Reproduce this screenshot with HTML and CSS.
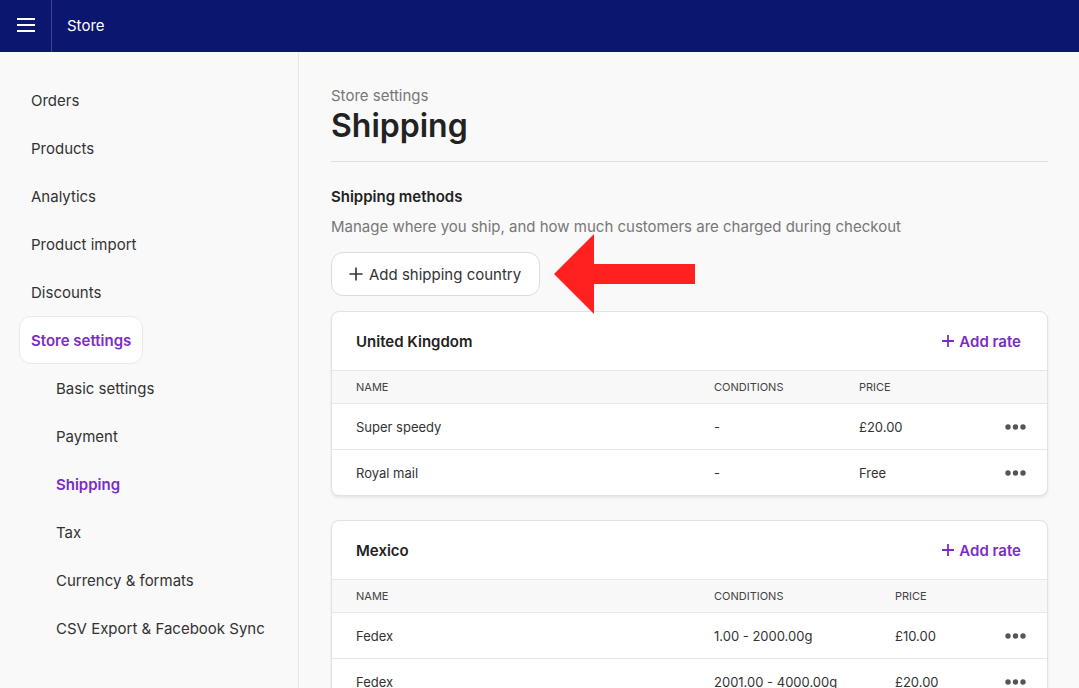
FILE: index.html
```html
<!DOCTYPE html>
<html lang="en">
<head>
    <meta charset="UTF-8">
    <meta name="viewport" content="width=device-width, initial-scale=1.0">
    <title>Shipping - Store settings</title>
    <link rel="stylesheet" href="styles.css">
</head>
<body>
    <header class="topbar">
        <button class="menu-btn" aria-label="Menu">
            <svg width="18" height="14" viewBox="0 0 18 14"><rect y="0" width="18" height="2" fill="#fff"/><rect y="6" width="18" height="2" fill="#fff"/><rect y="12" width="18" height="2" fill="#fff"/></svg>
        </button>
        <div class="topbar-title">Store</div>
    </header>

    <div class="layout">
        <nav class="sidebar">
            <a class="nav-item" href="#">Orders</a>
            <a class="nav-item" href="#">Products</a>
            <a class="nav-item" href="#">Analytics</a>
            <a class="nav-item" href="#">Product import</a>
            <a class="nav-item" href="#">Discounts</a>
            <a class="nav-item active" href="#">Store settings</a>
            <a class="nav-item sub" href="#">Basic settings</a>
            <a class="nav-item sub" href="#">Payment</a>
            <a class="nav-item sub current" href="#">Shipping</a>
            <a class="nav-item sub" href="#">Tax</a>
            <a class="nav-item sub" href="#">Currency &amp; formats</a>
            <a class="nav-item sub" href="#">CSV Export &amp; Facebook Sync</a>
        </nav>

        <main class="content">
            <div class="crumb">Store settings</div>
            <h1 class="page-title">Shipping</h1>

            <section class="methods">
                <h2 class="section-title">Shipping methods</h2>
                <p class="section-desc">Manage where you ship, and how much customers are charged during checkout</p>

                <div class="add-row">
                    <button class="btn-outline">
                        <svg width="14" height="14" viewBox="0 0 14 14"><path d="M7 0.5v13M0.5 7h13" stroke="#333" stroke-width="1.6"/></svg>
                        Add shipping country
                    </button>
                    <!-- callout arrow -->
                    <svg class="callout" width="142" height="80" viewBox="0 0 142 80"><polygon points="0,40 40,0 40,30 141,30 141,50 40,50 40,80" fill="#ff2020"/></svg>
                </div>

                <div class="card">
                    <div class="card-head">
                        <span class="country">United Kingdom</span>
                        <a class="add-rate" href="#">
                            <svg width="12" height="12" viewBox="0 0 12 12"><path d="M6 0v12M0 6h12" stroke="#7b2cc4" stroke-width="1.8"/></svg>
                            Add rate
                        </a>
                    </div>
                    <div class="rate-row th">
                        <span>Name</span><span>Conditions</span><span>Price</span><span></span>
                    </div>
                    <div class="rate-row">
                        <span>Super speedy</span><span>-</span><span>£20.00</span>
                        <span class="dots"><svg width="21" height="6" viewBox="0 0 21 6"><circle cx="3" cy="3" r="2.7"/><circle cx="10.5" cy="3" r="2.7"/><circle cx="18" cy="3" r="2.7"/></svg></span>
                    </div>
                    <div class="rate-row">
                        <span>Royal mail</span><span>-</span><span>Free</span>
                        <span class="dots"><svg width="21" height="6" viewBox="0 0 21 6"><circle cx="3" cy="3" r="2.7"/><circle cx="10.5" cy="3" r="2.7"/><circle cx="18" cy="3" r="2.7"/></svg></span>
                    </div>
                </div>

                <div class="card wide-cond">
                    <div class="card-head">
                        <span class="country">Mexico</span>
                        <a class="add-rate" href="#">
                            <svg width="12" height="12" viewBox="0 0 12 12"><path d="M6 0v12M0 6h12" stroke="#7b2cc4" stroke-width="1.8"/></svg>
                            Add rate
                        </a>
                    </div>
                    <div class="rate-row th">
                        <span>Name</span><span>Conditions</span><span>Price</span><span></span>
                    </div>
                    <div class="rate-row">
                        <span>Fedex</span><span>1.00 - 2000.00g</span><span>£10.00</span>
                        <span class="dots"><svg width="21" height="6" viewBox="0 0 21 6"><circle cx="3" cy="3" r="2.7"/><circle cx="10.5" cy="3" r="2.7"/><circle cx="18" cy="3" r="2.7"/></svg></span>
                    </div>
                    <div class="rate-row">
                        <span>Fedex</span><span>2001.00 - 4000.00g</span><span>£20.00</span>
                        <span class="dots"><svg width="21" height="6" viewBox="0 0 21 6"><circle cx="3" cy="3" r="2.7"/><circle cx="10.5" cy="3" r="2.7"/><circle cx="18" cy="3" r="2.7"/></svg></span>
                    </div>
                </div>
            </section>
        </main>
    </div>
</body>
</html>
```

FILE: styles.css
```css
* {
    box-sizing: border-box;
}
html, body {
    height: 100%;
}
body {
    margin: 0;
    font-family: Inter, "Noto Sans", sans-serif;
    font-size: 15px;
    color: #333;
    background-color: #f9f9f9;
    overflow: hidden;
}
a {
    text-decoration: none;
    color: inherit;
}
.topbar {
    height: 52px;
    background-color: #0b166f;
    display: flex;
    align-items: stretch;
}
.menu-btn {
    width: 52px;
    border: none;
    border-right: 1px solid #3a4490;
    background: transparent;
    padding: 0 0 2px 1px;
    display: flex;
    align-items: center;
    justify-content: center;
    cursor: pointer;
}
.topbar-title {
    color: #fff;
    font-size: 15px;
    display: flex;
    align-items: center;
    padding: 0 0 2px 15px;
}
.layout {
    display: flex;
    height: calc(100% - 52px);
}
.sidebar {
    width: 299px;
    flex-shrink: 0;
    border-right: 1px solid #e6e6e6;
    padding: 24px 0 0 19px;
    display: flex;
    flex-direction: column;
    align-items: flex-start;
}
.nav-item {
    height: 48px;
    line-height: 47px;
    padding: 0 11px;
    color: #333;
    border: 1px solid transparent;
    border-radius: 12px;
}
.nav-item.active {
    background-color: #fff;
    border-color: #e8e8e8;
    color: #7b2cc4;
    font-weight: 600;
}
.nav-item.sub {
    margin-left: 25px;
}
.nav-item.current {
    color: #7b2cc4;
    font-weight: 600;
}
.content {
    flex: 1;
    padding: 35px 31px 0 32px;
    overflow: hidden;
}
.crumb {
    color: #777;
    font-size: 15px;
    line-height: 18px;
}
.page-title {
    margin: 1px 0 0;
    font-size: 32px;
    line-height: 40px;
    font-weight: 600;
    color: #222;
    padding-bottom: 15px;
    border-bottom: 1px solid #dedede;
}
.section-title {
    margin: 26px 0 0;
    font-size: 15px;
    line-height: 18px;
    font-weight: 600;
    color: #222;
}
.section-desc {
    margin: 12px 0 0;
    color: #777;
    line-height: 18px;
}
.add-row {
    display: flex;
    align-items: center;
    margin-top: -2px;
    height: 80px;
    margin-bottom: -3px;
}
.btn-outline {
    height: 44px;
    padding: 0 18px 0 17px;
    background-color: #fff;
    border: 1px solid #dcdcdc;
    border-radius: 12px;
    font-family: inherit;
    font-size: 15px;
    color: #333;
    display: flex;
    align-items: center;
    gap: 6px;
}
.callout {
    margin-left: 14px;
}
.card {
    background-color: #fff;
    border: 1px solid #e2e2e2;
    border-radius: 8px;
    box-shadow: 0 2px 3px rgba(0, 0, 0, 0.08);
    overflow: hidden;
    margin-bottom: 24px;
}
.card-head {
    height: 58px;
    display: flex;
    align-items: center;
    justify-content: space-between;
    padding: 0 26px 0 24px;
}
.country {
    font-weight: 600;
    color: #222;
}
.add-rate {
    color: #7b2cc4;
    font-weight: 600;
    display: flex;
    align-items: center;
    gap: 5px;
}
.rate-row {
    display: grid;
    grid-template-columns: 358px 145px 1fr 40px;
    align-items: center;
    height: 46px;
    padding: 0 21px 0 24px;
    border-top: 1px solid #e8e8e8;
    font-size: 13px;
    color: #333;
}
.wide-cond .rate-row {
    grid-template-columns: 358px 181px 1fr 40px;
}
.rate-row.th {
    height: 33px;
    background-color: #f8f8f8;
    font-size: 11px;
    text-transform: uppercase;
    color: #444;
}
.dots {
    display: flex;
    justify-content: flex-end;
    fill: #555;
}
```
